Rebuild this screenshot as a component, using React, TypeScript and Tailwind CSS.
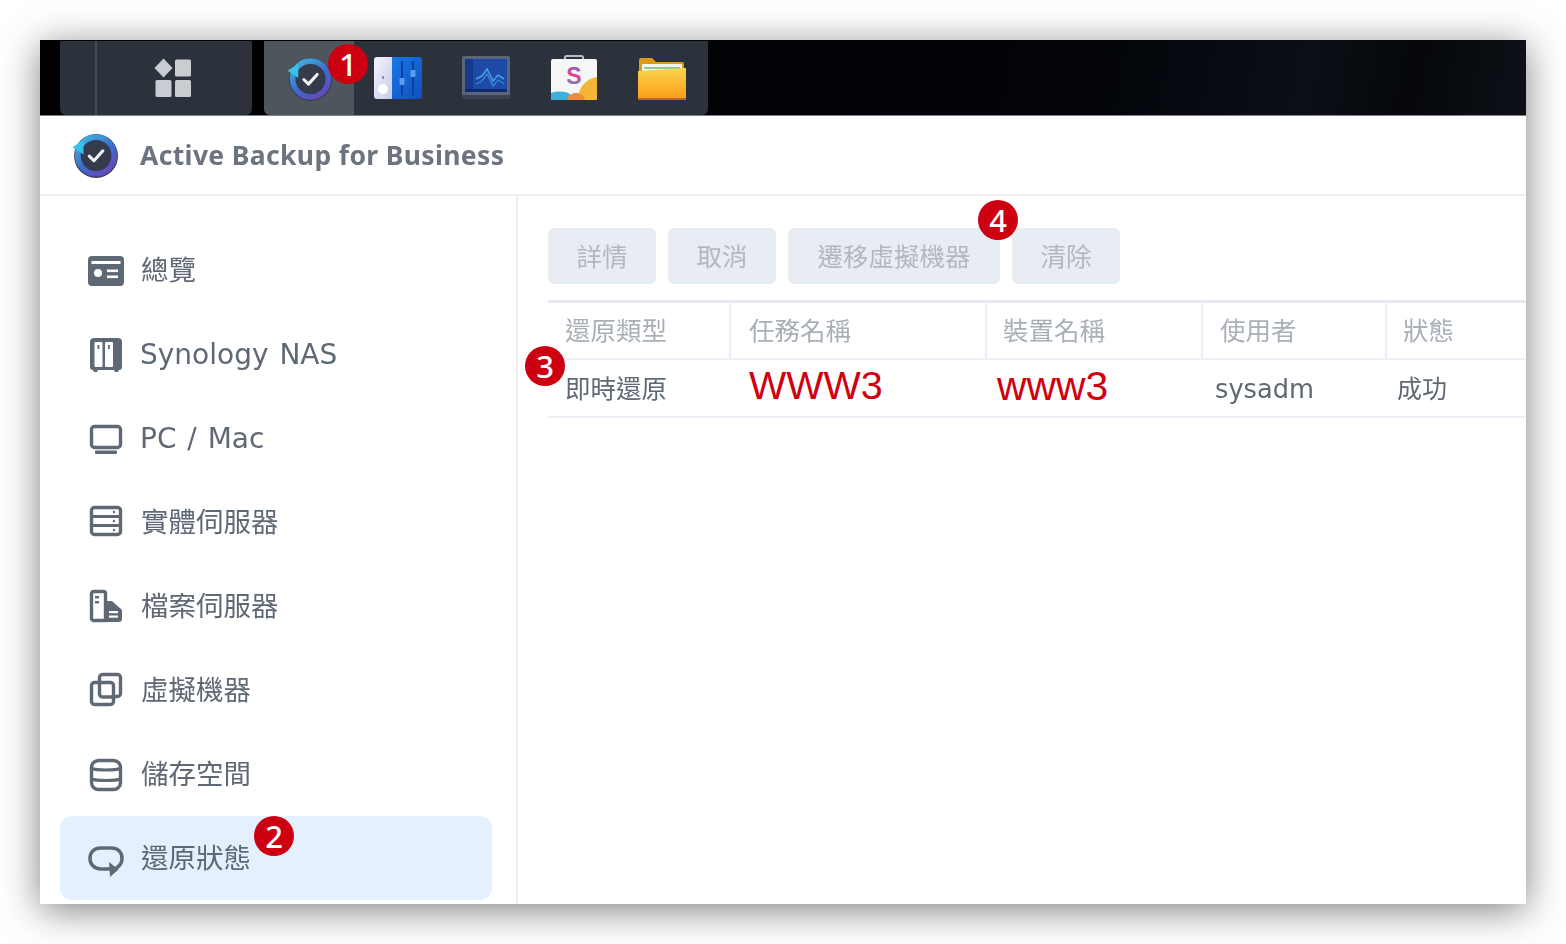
import React from "react";

const FONT = { fontFamily: '"Noto Sans", "Noto Sans CJK TC", sans-serif' };

function BackupIcon({ id, size }: { id: string; size: number }) {
  return (
    <svg width={size} height={size} viewBox="0 0 44 44">
      <defs>
        <linearGradient id={id} x1="0.1" y1="0" x2="0.8" y2="1">
          <stop offset="0" stopColor="#3fb4dc" />
          <stop offset="0.55" stopColor="#3c6ccc" />
          <stop offset="1" stopColor="#6548b8" />
        </linearGradient>
      </defs>
      <circle cx="23" cy="23" r="21" fill="#333a52" />
      <circle cx="23" cy="22.500" r="17.500" fill="none" stroke={`url(#${id})`} strokeWidth="5.500" />
      <circle cx="23" cy="22.500" r="13" fill="#363b4c" />
      <path d="M16.500 23l4.500 4.500 8.500-9.500" fill="none" stroke="#f1f3f6" strokeWidth="3" strokeLinecap="round" strokeLinejoin="round" />
      <path d="M0.500 14.500l10.500-7v14z" fill="#37c2ea" />
    </svg>
  );
}

function GridIcon() {
  return (
    <svg width="38" height="40" viewBox="0 0 38 40" fill="#c9cdd2">
      <path d="M9.500 0.500L18.500 10 9.500 19.500 0.500 10z" />
      <rect x="21" y="1.500" width="16" height="17" rx="1.500" />
      <rect x="1.500" y="22" width="16" height="17" rx="1.500" />
      <rect x="21" y="22" width="16" height="17" rx="1.500" />
    </svg>
  );
}

function SettingsIcon() {
  return (
    <svg width="48" height="44" viewBox="0 0 48 44">
      <defs>
        <linearGradient id="sp" x1="0" y1="0" x2="1" y2="1">
          <stop offset="0" stopColor="#f4f5fc" />
          <stop offset="1" stopColor="#c6cbe8" />
        </linearGradient>
        <linearGradient id="sb" x1="0" y1="0" x2="1" y2="1">
          <stop offset="0" stopColor="#1a78e6" />
          <stop offset="1" stopColor="#0f4ec0" />
        </linearGradient>
      </defs>
      <path d="M3 1h15v42H3a3 3 0 0 1-3-3V4a3 3 0 0 1 3-3z" fill="url(#sp)" />
      <path d="M18 1h27a3 3 0 0 1 3 3v36a3 3 0 0 1-3 3H18z" fill="url(#sb)" />
      <circle cx="9" cy="33" r="5" fill="#fff" />
      <rect x="8" y="20" width="2" height="3" fill="#8b90a8" />
      <rect x="27" y="5" width="2" height="34" fill="#0b429f" />
      <rect x="38" y="5" width="2" height="34" fill="#0b429f" />
      <rect x="25.500" y="22" width="5" height="7" rx="1" fill="#5a9cf0" />
      <rect x="36.500" y="14" width="5" height="7" rx="1" fill="#5a9cf0" />
    </svg>
  );
}

function MonitorIcon() {
  return (
    <svg width="48" height="44" viewBox="0 0 48 44">
      <rect x="0" y="0" width="48" height="40" rx="1.500" fill="#5b6478" />
      <rect x="0" y="39" width="48" height="4" rx="1" fill="#3a4150" />
      <rect x="3" y="3" width="42" height="33" fill="#1c4aa6" />
      <rect x="3" y="3" width="8" height="33" fill="#153a8c" />
      <path d="M14 23l6-3 5-7 6 12 5-6 6 4" fill="none" stroke="#4a9fe0" strokeWidth="1.600" />
      <path d="M14 28l6-3 5-7 6 12 5-6 6 4" fill="none" stroke="#3a86d2" strokeWidth="1.300" />
      <rect x="3" y="33" width="42" height="3" fill="#0e2a68" />
    </svg>
  );
}

function BagIcon() {
  return (
    <svg width="46" height="46" viewBox="0 0 46 46">
      <defs>
        <linearGradient id="ss" x1="0" y1="0" x2="0" y2="1">
          <stop offset="0" stopColor="#6a62d8" />
          <stop offset="0.5" stopColor="#ec3f86" />
          <stop offset="1" stopColor="#29a6e0" />
        </linearGradient>
      </defs>
      <path d="M14 5V2.500A1.500 1.500 0 0 1 15.500 1h15A1.500 1.500 0 0 1 32 2.500V5" fill="none" stroke="#b9bec6" strokeWidth="2" />
      <rect x="0" y="4" width="46" height="41" rx="2" fill="#f5f6f6" />
      <path d="M27 45c0-13 8-21 19-23v21a2 2 0 0 1-2 2z" fill="#f2b638" />
      <path d="M0 38c7-2 13-2 19 1v6H2a2 2 0 0 1-2-2z" fill="#3fb0de" />
      <path d="M16 45c1-5 5-7 9-7s8 2 9 7z" fill="#f08a3c" />
      <text x="23" y="29" textAnchor="middle" fontSize="23" fontWeight="700" fontFamily="Liberation Sans, sans-serif" fill="url(#ss)">S</text>
    </svg>
  );
}

function FolderIcon() {
  return (
    <svg width="48" height="46" viewBox="0 0 48 46">
      <defs>
        <linearGradient id="fo" x1="0" y1="0" x2="0" y2="1">
          <stop offset="0" stopColor="#fbd650" />
          <stop offset="1" stopColor="#fb9a12" />
        </linearGradient>
      </defs>
      <path d="M1 5a2 2 0 0 1 2-2h11l4 4h26a2 2 0 0 1 2 2v10H1z" fill="#e09a10" />
      <rect x="4" y="9" width="40" height="10" fill="#f2f4ea" />
      <rect x="6" y="12" width="36" height="2" fill="#8cc79a" />
      <path d="M0 16l48-3v29a3 3 0 0 1-3 3H3a3 3 0 0 1-3-3z" fill="url(#fo)" />
      <rect x="0" y="43" width="48" height="2" fill="#b86f0c" />
    </svg>
  );
}

const C = "#5f6975";

function NavIcon({ name }: { name: string }) {
  const s = { fill: "none", stroke: C, strokeWidth: 3.4, strokeLinejoin: "round" as const, strokeLinecap: "round" as const };
  let body: React.ReactNode = null;
  if (name === "overview")
    body = (
      <>
        <rect x="0" y="4" width="36" height="30" rx="4" fill={C} />
        <rect x="3.500" y="9" width="29" height="3" fill="#fff" />
        <circle cx="10" cy="21" r="4" fill="#fff" />
        <rect x="19" y="17.500" width="11" height="2.600" fill="#fff" />
        <rect x="19" y="23.500" width="11" height="2.600" fill="#fff" />
      </>
    );
  if (name === "nas")
    body = (
      <>
        <path d="M6 2h24a4 4 0 0 1 4 4v25a3 3 0 0 1-3 3l-1 2h-3l-1-2H10l-1 2H6l-1-2a3 3 0 0 1-3-3V6a4 4 0 0 1 4-4z" fill={C} />
        <rect x="6.500" y="6" width="8" height="25" rx="1" fill="#fff" />
        <rect x="17" y="6" width="8" height="25" rx="1" fill="#fff" />
        <rect x="9.500" y="9" width="1.800" height="4" fill={C} />
        <rect x="20" y="9" width="1.800" height="4" fill={C} />
      </>
    );
  if (name === "pc")
    body = (
      <>
        <rect x="3.500" y="6.500" width="29" height="21" rx="3" {...s} />
        <rect x="7" y="30.500" width="22" height="3.600" rx="1" fill={C} />
      </>
    );
  if (name === "server")
    body = (
      <>
        <rect x="3.500" y="3.500" width="29" height="27" rx="3" {...s} />
        <path d="M3.500 12.500h29M3.500 21.500h29" {...s} strokeWidth={3} />
        <circle cx="26" cy="8" r="1.200" fill={C} />
        <circle cx="26" cy="17" r="1.200" fill={C} />
        <circle cx="26" cy="26" r="1.200" fill={C} />
      </>
    );
  if (name === "file")
    body = (
      <>
        <path d="M5.500 3.500h10a2 2 0 0 1 2 2v27h-12a2 2 0 0 1-2-2v-25a2 2 0 0 1 2-2z" {...s} />
        <path d="M17.500 14.500h6l9 8v8a2 2 0 0 1-2 2h-13z" fill={C} stroke={C} strokeWidth="3" strokeLinejoin="round" />
        <rect x="21" y="23" width="9" height="2.200" fill="#fff" />
        <rect x="21" y="27.500" width="9" height="2.200" fill="#fff" />
        <rect x="7" y="8" width="4" height="2.400" fill={C} />
        <rect x="7" y="13" width="4" height="2.400" fill={C} />
      </>
    );
  if (name === "vm")
    body = (
      <>
        <path d="M11.500 9V6a3 3 0 0 1 3-3.500h15a3 3 0 0 1 3 3v16a3 3 0 0 1-3 3h-4" {...s} />
        <rect x="3.500" y="10.500" width="22" height="22" rx="3" {...s} />
        <path d="M11.500 11v11a3 3 0 0 0 3 3H25" {...s} />
      </>
    );
  if (name === "storage")
    body = (
      <>
        <rect x="3.500" y="4.500" width="29" height="29" rx="7" {...s} />
        <path d="M3.500 12.500c5 2 24 2 29 0M3.500 23c5 2 24 2 29 0" {...s} strokeWidth={3} />
      </>
    );
  if (name === "restore")
    body = (
      <>
        <path d="M22 29H13C6 29 2 24 2 18.500 2 12 6.500 8 13 8h10c6.500 0 11 4 11 10.500 0 4-2 7-5 9" {...s} strokeWidth={3.600} />
        <path d="M21 22l9.500 7.500-8.500 7.500z" fill={C} />
      </>
    );
  return (
    <svg width="36" height="36" viewBox="0 0 36 36" className="shrink-0 overflow-visible">
      {body}
    </svg>
  );
}

const NAV = [
  { icon: "overview", label: "總覽", latin: false },
  { icon: "nas", label: "Synology NAS", latin: true },
  { icon: "pc", label: "PC / Mac", latin: true },
  { icon: "server", label: "實體伺服器", latin: false },
  { icon: "file", label: "檔案伺服器", latin: false },
  { icon: "vm", label: "虛擬機器", latin: false },
  { icon: "storage", label: "儲存空間", latin: false },
  { icon: "restore", label: "還原狀態", latin: false },
];

const BUTTONS = [
  { label: "詳情", w: "w-[108px]" },
  { label: "取消", w: "w-[108px]" },
  { label: "遷移虛擬機器", w: "w-[212px]" },
  { label: "清除", w: "w-[108px]" },
];

const HEAD = [
  { label: "還原類型", cls: "pl-[17px]" },
  { label: "任務名稱", cls: "pl-[18px] border-l-2 border-[#eceff5]" },
  { label: "裝置名稱", cls: "pl-[16px] border-l-2 border-[#eceff5]" },
  { label: "使用者", cls: "pl-[17px] border-l-2 border-[#eceff5]" },
  { label: "狀態", cls: "pl-[16px] border-l-2 border-[#eceff5]" },
];

const BADGES = [
  { n: "1", cls: "left-[288px] top-[4px]" },
  { n: "2", cls: "left-[214px] top-[776px]" },
  { n: "3", cls: "left-[485px] top-[306px]" },
  { n: "4", cls: "left-[938px] top-[160px]" },
];

export default function App() {
  return (
    <div className="h-[944px] w-[1566px] overflow-hidden bg-white pl-[40px] pt-[40px]" style={FONT}>
      <div className="relative flex h-[864px] w-[1486px] flex-col bg-white shadow-[0_6px_36px_rgba(0,0,0,0.5)]">
        {/* taskbar */}
        <div className="flex h-[76px] shrink-0 border-b border-[#7d828a] bg-[linear-gradient(100deg,#000000_0%,#02040a_70%,#0c0f15_85%,#05070c_92%,#0e1117_100%)] pt-[1px]">
          <div className="ml-[20px] flex h-full w-[192px] rounded-b-[6px] bg-[#2c323c]">
            <div className="w-[37px] border-r-2 border-[#454b54]" />
            <div className="flex flex-1 items-center justify-center pr-[3px]">
              <GridIcon />
            </div>
          </div>
          <div className="ml-[12px] flex h-full w-[444px] items-center rounded-b-[6px] bg-[#2c323c]">
            <div className="flex h-full w-[90px] items-center justify-center rounded-bl-[6px] bg-[#4f555d]">
              <BackupIcon id="bk1" size={45} />
            </div>
            <div className="ml-[20px]"><SettingsIcon /></div>
            <div className="ml-[40px]"><MonitorIcon /></div>
            <div className="ml-[41px]"><BagIcon /></div>
            <div className="ml-[41px]"><FolderIcon /></div>
          </div>
        </div>

        {/* app header */}
        <div className="flex h-[80px] shrink-0 items-center border-b-2 border-[#eef0f6] pl-[32px]">
          <BackupIcon id="bk2" size={46} />
          <span className="ml-[22px] text-[26.500px] font-bold leading-none tracking-[0.36px] text-[#6c7480] blur-[0.7px]">
            Active Backup for Business
          </span>
        </div>

        {/* body */}
        <div className="flex min-h-0 flex-1">
          <aside className="w-[478px] shrink-0 overflow-hidden border-r-2 border-[#eef0f6] pl-[20px] pr-[24px] pt-[32px]">
            {NAV.map((n) => (
              <div
                key={n.label}
                className={`flex h-[84px] items-center rounded-[12px] pl-[28px] ${n.icon === "restore" ? "bg-[#e4f0fd]" : ""}`}
              >
                <NavIcon name={n.icon} />
                {n.latin ? (
                  <span className="ml-[16px] pt-[2px] text-[28px] leading-none text-[#5f6975] blur-[0.7px] [font-family:'DejaVu_Sans',sans-serif] [word-spacing:2px]">
                    {n.label}
                  </span>
                ) : (
                  <span className="ml-[17px] text-[27.500px] leading-none text-[#5f6975] blur-[0.7px]">{n.label}</span>
                )}
              </div>
            ))}
          </aside>

          <main className="min-w-0 flex-1 pl-[30px] pt-[32px]">
            <div className="flex gap-[12px]">
              {BUTTONS.map((b) => (
                <div
                  key={b.label}
                  className={`flex h-[56px] items-center justify-center rounded-[6px] bg-[#e8edf4] pt-[2px] text-[25.500px] leading-none text-[#b3b8c0] ${b.w}`}
                >
                  <span className="blur-[0.7px]">{b.label}</span>
                </div>
              ))}
            </div>

            <div className="mt-[16px] grid h-[60px] grid-cols-[181px_256px_216px_184px_1fr] border-y-2 border-t-[3px] border-[#e6e9f0] border-b-[#eceff5]">
              {HEAD.map((h) => (
                <div key={h.label} className={`flex items-center pt-[1px] text-[25.500px] leading-none text-[#a9afb7] ${h.cls}`}>
                  <span className="blur-[0.6px]">{h.label}</span>
                </div>
              ))}
            </div>

            <div className="grid h-[58px] grid-cols-[181px_256px_216px_184px_1fr] items-center border-b-2 border-[#eceff5]">
              <div className="pl-[17px] pt-[1px] text-[25.500px] leading-none text-[#5f6975] blur-[0.7px]">即時還原</div>
              <div className="pb-[4px] pl-[20px] text-[39.500px] leading-none text-[#d0000f] [font-family:'Liberation_Sans',sans-serif]">WWW3</div>
              <div className="pb-[4px] pl-[12px] text-[40.800px] leading-none text-[#d0000f] [font-family:'Liberation_Sans',sans-serif]">www3</div>
              <div className="pl-[14px] pt-[3px] text-[25.700px] leading-none text-[#5f6975] blur-[0.7px] [font-family:'DejaVu_Sans',sans-serif]">sysadm</div>
              <div className="pl-[12px] pt-[1px] text-[25px] leading-none text-[#5f6975] blur-[0.7px]">成功</div>
            </div>
          </main>
        </div>

        {BADGES.map((b) => (
          <div
            key={b.n}
            className={`absolute flex h-[40px] w-[40px] items-center justify-center rounded-full bg-[#cc0010] text-[31px] font-medium leading-none text-white ${b.cls}`}
          >
            {b.n}
          </div>
        ))}
      </div>
    </div>
  );
}
